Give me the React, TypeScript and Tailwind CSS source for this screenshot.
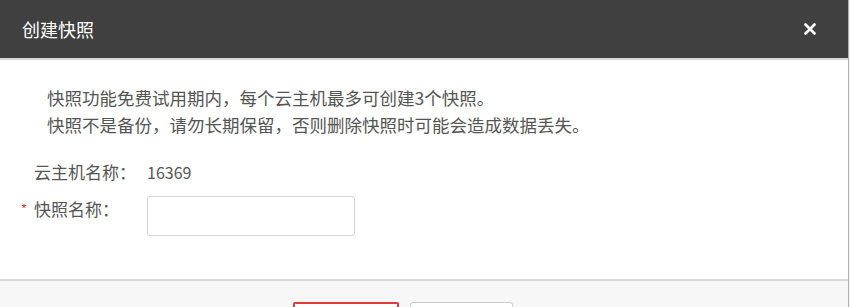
import { X } from 'lucide-react';

const font = { fontFamily: '"Microsoft YaHei", "Noto Sans CJK SC", "Liberation Sans", sans-serif' };

const App = () => {
    return (
        <div className="h-[307px] w-[850px] overflow-hidden bg-[#efefef]" style={font}>
            <div className="flex h-full w-[849px] flex-col border-r border-[#b3b3b3] bg-white">
                {/* Header */}
                <div className="box-content flex h-[58px] shrink-0 items-center justify-between border-b-2 border-[#d5d5d5] bg-[#404040] pl-[22px] pr-[29px]">
                    <h3 className="text-[18px] text-white">创建快照</h3>
                    <button type="button" title="Close" className="text-white">
                        <X className="h-[18px] w-[18px]" strokeWidth={3.5} />
                    </button>
                </div>

                {/* Notice */}
                <div className="pl-[47px] pt-[24px] text-[17.5px] leading-[27px] text-[#555]">
                    <p>快照功能免费试用期内，每个云主机最多可创建3个快照。</p>
                    <p>快照不是备份，请勿长期保留，否则删除快照时可能会造成数据丢失。</p>
                </div>

                {/* Form */}
                <div className="flex flex-col gap-[11px] pt-[21px] text-[17px] text-[#555]">
                    <div className="flex h-[26px] items-center">
                        <span className="w-[34px]" />
                        <span className="w-[113px]">云主机名称：</span>
                        <span className="text-[16px]">16369</span>
                    </div>
                    <div className="flex items-start">
                        <span className="w-[34px] pl-[21px] pt-[3px] text-[13px] text-[#e4393c]">*</span>
                        <span className="w-[113px] leading-[26px]">快照名称：</span>
                        <input
                            type="text"
                            className="h-[40px] w-[208px] rounded-[3px] border border-[#d6d6d6] px-2 text-[14px] outline-none"
                        />
                    </div>
                </div>

                {/* Footer */}
                <div className="mt-auto flex h-[28px] shrink-0 justify-center gap-[11px] border-t-2 border-[#d9d9d9] bg-[#f7f7f7] pr-[42px] pt-[21px]">
                    <button type="button" className="h-[32px] w-[106px] rounded-[2px] border-2 border-[#e4393c] bg-white" />
                    <button type="button" className="h-[32px] w-[103px] rounded-[3px] border border-[#ccc] bg-white" />
                </div>
            </div>
        </div>
    );
};

export default App;
